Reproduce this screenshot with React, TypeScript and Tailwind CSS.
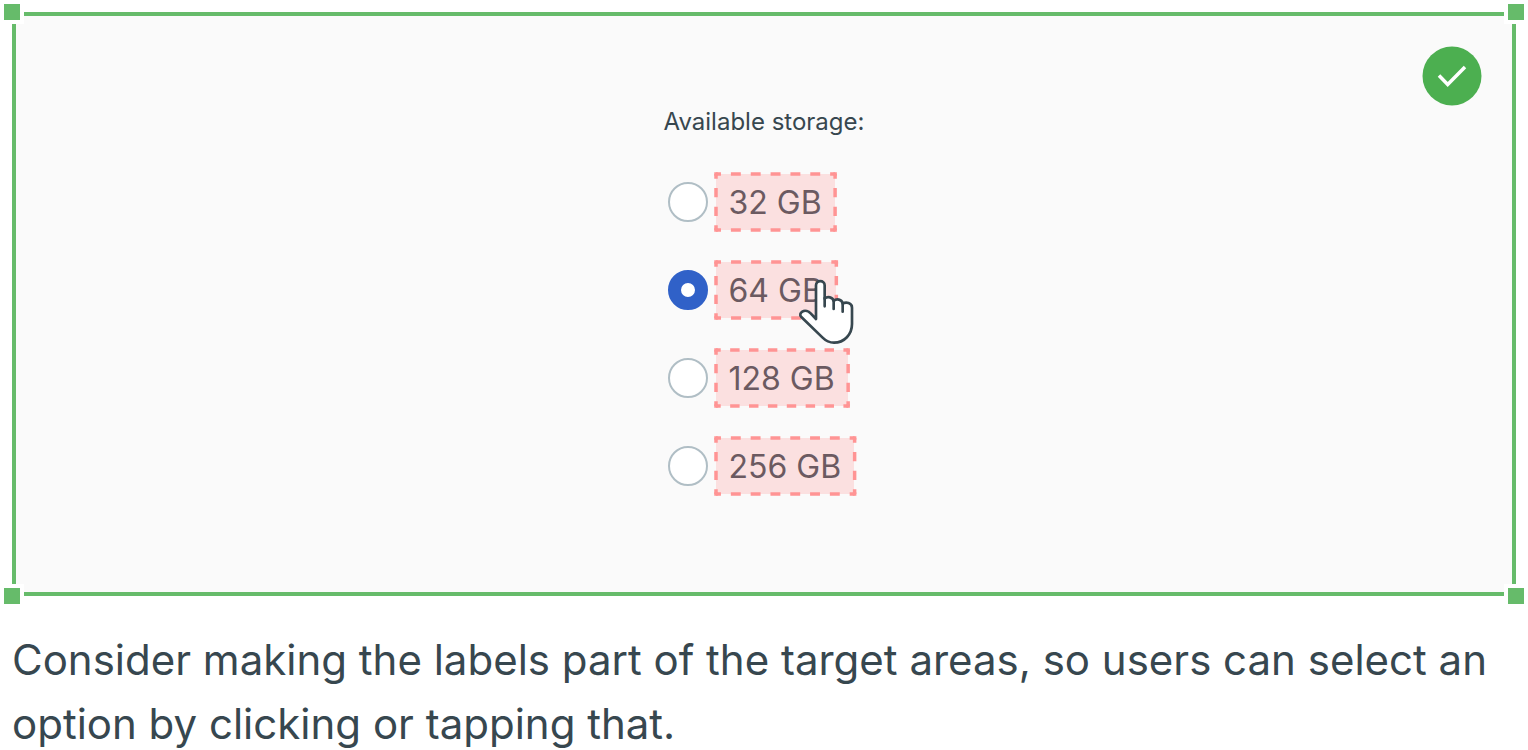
import { useState } from 'react';

const OPTIONS = [
  { value: '32', label: '32 GB', dashes: 6 },
  { value: '64', label: '64 GB', dashes: 6 },
  { value: '128', label: '128 GB', dashes: 7 },
  { value: '256', label: '256 GB', dashes: 7 },
];

const CORNERS = [
  '-top-3 -left-3',
  '-top-3 -right-3',
  '-bottom-3 -left-3',
  '-bottom-3 -right-3',
];

// Dashed outline, each side starts and ends on half a dash
function TargetOutline({ dashes }: { dashes: number }) {
  const across = { pathLength: dashes * 20, strokeDasharray: '10 10', strokeDashoffset: 5 };
  const down = { pathLength: 60, strokeDasharray: '10 10', strokeDashoffset: 5 };
  return (
    <svg
      className="absolute inset-0 h-full w-full overflow-visible"
      stroke="#ff9494"
      strokeWidth="3.5"
      aria-hidden="true"
    >
      <line x1="0" y1="0" x2="100%" y2="0" {...across} />
      <line x1="0" y1="100%" x2="100%" y2="100%" {...across} />
      <line x1="0" y1="0" x2="0" y2="100%" {...down} />
      <line x1="100%" y1="0" x2="100%" y2="100%" {...down} />
      {['0', '100%'].map(x =>
        ['0', '100%'].map(y => (
          <svg key={x + y} x={x} y={y} className="overflow-visible">
            <rect x="-1.75" y="-1.75" width="3.5" height="3.5" fill="#ff9494" stroke="none" />
          </svg>
        ))
      )}
    </svg>
  );
}

function HandCursor() {
  return (
    <svg
      className="pointer-events-none absolute top-4 left-[82px] h-[67px] w-[57px]"
      viewBox="24 24 171 201"
      fill="#fff"
      stroke="#37474f"
      strokeWidth="8"
      strokeLinecap="round"
      strokeLinejoin="round"
      aria-hidden="true"
    >
      <path d="M78 147V46C78 29 104 29 104 46V86C112 78 129 81 131 93C139 85 156 87 158 101C168 95 186 98 186 113V162C186 193 163 218 132 218C118 218 107 212 97 202L34 141C28 135 31 129 37 125C45 120 56 124 62 130Z" />
      <path d="M104 84V109M131 93V117M158 101V125" fill="none" />
    </svg>
  );
}

export default function App() {
  const [selected, setSelected] = useState('64');

  return (
    <main className="min-h-screen overflow-hidden bg-white text-[#37474f]">
      <figure className="px-3 pt-3">
        <div className="relative flex justify-center border-4 border-[#66bb6a] bg-[#fafafa] pt-[90px] pb-[98px]">
          {CORNERS.map(pos => (
            <span key={pos} className={`absolute h-6 w-6 -m-1 border-4 border-white bg-[#66bb6a] ${pos}`} />
          ))}

          <svg className="absolute top-[30px] right-[30px] h-[60px] w-[60px]" viewBox="0 0 60 60" fill="none" aria-hidden="true">
            <circle cx="30" cy="30" r="29.5" fill="#4caf50" />
            <path d="M17 29.5L25.7 38.5L43 21" stroke="#fff" strokeWidth="3.5" />
          </svg>

          <fieldset className="font-['Inter',sans-serif]">
            <legend className="text-2xl leading-8">Available storage:</legend>
            <div className="mt-9 flex flex-col items-start gap-8 pl-1">
              {OPTIONS.map(o => (
                <div key={o.value} className="flex items-center gap-2">
                  <input
                    type="radio"
                    name="storage"
                    id={`storage-${o.value}`}
                    value={o.value}
                    checked={selected === o.value}
                    onChange={() => setSelected(o.value)}
                    className="h-10 w-10 appearance-none rounded-full border-2 border-[#b0bec5] bg-white checked:border-[13px] checked:border-[#3061c8]"
                  />
                  <label
                    htmlFor={`storage-${o.value}`}
                    className="relative bg-[#fbe0e0] px-[13px] pt-0.5 text-[32px] leading-[54px] text-[#6b5a61]"
                  >
                    {o.label}
                    <TargetOutline dashes={o.dashes} />
                    {o.value === '64' && <HandCursor />}
                  </label>
                </div>
              ))}
            </div>
          </fieldset>
        </div>

        <figcaption className="pt-8 font-['Inter',sans-serif] text-[42px] leading-[64px]">
          Consider making the labels part of the target areas, so users can select an option by clicking or tapping that.
        </figcaption>
      </figure>
    </main>
  );
}
